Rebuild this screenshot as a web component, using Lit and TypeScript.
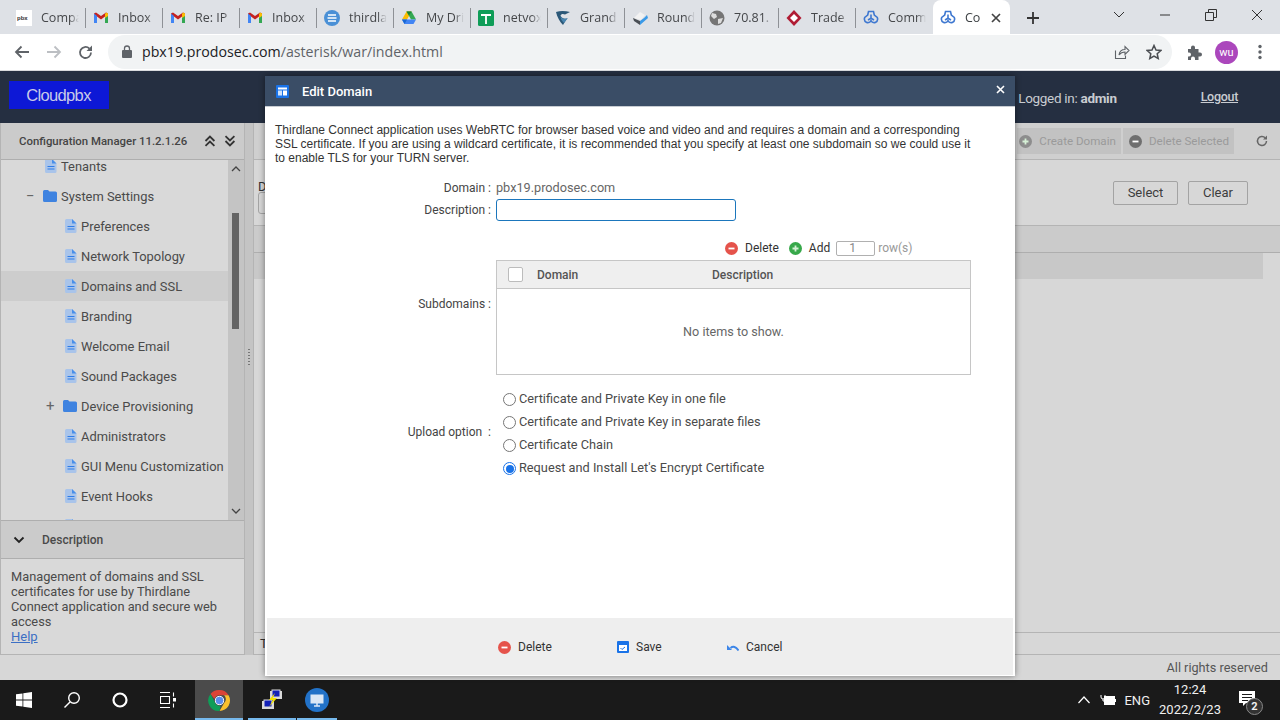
import { LitElement, html, css, svg } from "lit";
import { customElement } from "lit/decorators.js";

const gmail = svg`<svg width="16" height="16" viewBox="0 0 16 16"><path d="M1 3.500V13h3V6.500L8 9.500l4-3V13h3V3.500L13 2.500 8 6 3 2.500z" fill="#c5221f"/><path d="M1 3.500V13h3V6z" fill="#4285f4"/><path d="M15 3.500V13h-3V6z" fill="#34a853"/><path d="M13 2.500 15 3.500 15 6 12 8V4z" fill="#fbbc04"/></svg>`;
const triad = svg`<svg width="16" height="16" viewBox="0 0 16 16" fill="none" stroke="#3f78d0" stroke-width="1.600"><path d="M5.500 1.500h5l.8 3.500 3 2.500c.7 2-.3 4.200-2 5-1.500.4-2.800 0-3.800-1L8 10.500l-.5 1c-1 1-2.300 1.400-3.800 1-1.700-.8-2.700-3-2-5l3-2.500z"/><path d="M8 4.500v4M5 10l3-1.800L11 10"/></svg>`;

const tabs = [
  { t: "Compa", i: svg`<svg width="16" height="16"><rect width="16" height="16" fill="#fff"/><text x="1" y="10" font-size="6" font-family="Liberation Sans" font-weight="700" fill="#333">pbx</text></svg>` },
  { t: "Inbox", i: gmail },
  { t: "Re: IP", i: gmail },
  { t: "Inbox", i: gmail },
  { t: "thirdla", i: svg`<svg width="16" height="16"><circle cx="8" cy="8" r="8" fill="#4a90d6"/><path d="M4 5h8M3.500 8h9M4 11h8" stroke="#fff" stroke-width="1.300"/></svg>` },
  { t: "My Dri", i: svg`<svg width="16" height="16"><path d="M5.500 1.500h5L6 9.500H1z" fill="#fbbc04"/><path d="M5.500 1.500h5l4.500 8h-5z" fill="#34a853"/><path d="M1 9.500h14l-2.500 4.500h-9z" fill="#4285f4"/><path d="M1 9.500h5L3.500 14z" fill="#1967d2"/><path d="M5.500 1.500h5l-2.500 4z" fill="#188038"/></svg>` },
  { t: "netvox", i: svg`<svg width="16" height="16"><rect width="16" height="16" rx="1.500" fill="#0f9d58"/><path d="M3 5h10M8 5v9" stroke="#fff" stroke-width="1.800"/></svg>` },
  { t: "Grand", i: svg`<svg width="16" height="16" viewBox="0 0 16 16"><path d="M1 2C5 .5 10 .5 15 2L10 4.500C8 3.500 6 4 5.500 5.500 6 8 9 9 12 8.500L8 15C5 12 2 7 1 2z" fill="#2b5878"/><path d="M5.500 6C7 9 10 9.500 13 8L9 13C7 11 5.500 9 5.500 6z" fill="#4a86b0"/></svg>` },
  { t: "Round", i: svg`<svg width="16" height="16" viewBox="0 0 16 16"><path d="M2 8 8 2l5 3-4 5z" fill="#f2f2f2"/><path d="M1 8l1 3 6 4V11z" fill="#4a4f55"/><path d="M8 15V11l4-3 3-3 1 3z" fill="#3a9ae8"/></svg>` },
  { t: "70.81.", i: svg`<svg width="16" height="16"><circle cx="8" cy="8" r="7.500" fill="#757575"/><path d="M3 3l4 1 1 3-3 2-3-3zM9 9l5-1-2 5-3 1z" fill="#ddd"/></svg>` },
  { t: "Trade", i: svg`<svg width="16" height="16"><path d="M8 0 15.500 8 8 16 .5 8z" fill="#b01c34"/><path d="M8 4l4 4-4 4-4-4z" fill="#fff"/></svg>` },
  { t: "Comm", i: triad },
];

const fileIcon = svg`<svg class="ic" width="12" height="14" viewBox="0 0 12 14"><path d="M1.500 0H7l4.500 4.500V12.500A1.500 1.500 0 0 1 10 14H1.500A1.500 1.500 0 0 1 0 12.500V1.500A1.500 1.500 0 0 1 1.500 0z" fill="#a9c4ea"/><path d="M7 0l4.500 4.500H7z" fill="#4a8fe8"/><path d="M2.500 7.500h7M2.500 10h7" stroke="#2f7de8" stroke-width="1.100"/></svg>`;
const folderIcon = svg`<svg class="ic" width="14" height="12" viewBox="0 0 14 12"><path d="M0 1.500A1.500 1.500 0 0 1 1.500 0H5l1.500 1.500h6A1.500 1.500 0 0 1 14 3v7.500a1.500 1.500 0 0 1-1.500 1.500h-11A1.500 1.500 0 0 1 0 10.500z" fill="#3f83e0"/></svg>`;
const circ = (color: string, plus: boolean, s = 13) => svg`<svg class="ic" width=${s} height=${s} viewBox="0 0 13 13"><circle cx="6.500" cy="6.500" r="6.500" fill=${color}/><path d=${plus ? "M3.500 6.500h6M6.500 3.500v6" : "M3.500 6.500h6"} stroke=${plus ? "#d6f0d6" : "#fff"} stroke-width="1.800"/></svg>`;

const tree = [
  { t: "Tenants", d: 2 }, { t: "System Settings", d: 1, folder: true, sign: "−" },
  { t: "Preferences", d: 2 }, { t: "Network Topology", d: 2 }, { t: "Domains and SSL", d: 2, sel: true },
  { t: "Branding", d: 2 }, { t: "Welcome Email", d: 2 }, { t: "Sound Packages", d: 2 },
  { t: "Device Provisioning", d: 2, folder: true, sign: "+" }, { t: "Administrators", d: 2 },
  { t: "GUI Menu Customization", d: 2 }, { t: "Event Hooks", d: 2 }, { t: "", d: 2 },
];

@customElement("app-root")
export class AppRoot extends LitElement {
  static styles = css`
    :host { display: block; width: 1280px; height: 720px; overflow: hidden; position: relative; font-family: Roboto, sans-serif; color: #333; }
    * { box-sizing: border-box; }
    .ic { flex: none; display: block; }
    .page { display: flex; flex-direction: column; height: 720px; }
    .tabs { height: 34px; background: #dee1e6; display: flex; padding: 0 0 0 9px; align-items: stretch; flex: none; }
    .tab { width: 77px; display: flex; align-items: center; padding-left: 7px; gap: 9px; font: 12.500px "Open Sans", sans-serif; color: #45474a; position: relative; padding-top: 1px; }
    .tab .lbl { width: 38px; overflow: hidden; white-space: nowrap; -webkit-mask-image: linear-gradient(90deg,#000 75%,transparent); mask-image: linear-gradient(90deg,#000 75%,transparent); }
    .tab.sep::after { content: ""; position: absolute; right: 0; top: 8px; height: 20px; width: 1px; background: #8e9196; }
    .tab.active { background: #fff; border-radius: 8px 8px 0 0; color: #3c4043; }
    .tab.active .lbl { width: 20px; }
    .tab.active .x { margin-left: -3px; }
    .newtab { width: 46px; display: flex; justify-content: center; align-items: center; padding-top: 1px; }
    .winctl { margin-left: auto; display: flex; align-items: center; padding-bottom: 4px; }
    .winctl div { width: 46px; display: flex; justify-content: center; }
    .toolbar { height: 37px; background: #fff; display: flex; align-items: center; flex: none; padding-left: 14px; border-bottom: 1px solid #d8dade; }
    .nav { display: flex; gap: 16px; align-items: center; width: 94px; flex: none; }
    .omni { width: 1064px; height: 34px; background: #f1f3f4; border-radius: 17px; display: flex; align-items: center; padding: 0 0 0 14px; gap: 10px; flex: none; margin-top: -1px; font: 14.200px "Open Sans", sans-serif; color: #5f6368; }
    .omni b { font-weight: 400; color: #202124; }
    .omni .r { margin-left: auto; display: flex; gap: 16px; padding-right: 10px; align-items: center; }
    .ext { display: flex; align-items: center; gap: 13px; padding-left: 15px; }
    .avatar { width: 23px; height: 23px; border-radius: 50%; background: #ab47bc; color: #fff; font-size: 11px; display: flex; justify-content: center; align-items: center; }
    .dots { margin-left: 7px; }
    .apphead { height: 52px; background: #252f41; display: flex; flex: none; position: relative; align-items: flex-start; padding: 10px 9px; color: #cfd2d6; font-size: 14px; }
    .logo { width: 100px; height: 28px; background: #0d18d6; color: #c8cae8; font: 16.500px "Liberation Sans", sans-serif; letter-spacing: -.65px; display: flex; align-items: center; justify-content: center; padding-right: 1px; }
    .login { margin-left: auto; display: flex; gap: 84px; padding: 9px 33px 0 0; font: 13.500px Roboto, sans-serif; letter-spacing: -.3px; color: #c9ccd1; align-items: flex-start; }
    .login b { font-weight: 700; }
    .login u { font-weight: 500; font-size: 12.500px; margin-top: -1px; }
    .main { flex: 1; display: flex; background: #d7d7d7; min-height: 0; }
    .left { width: 245px; flex: none; border: solid #b4b4b4; border-width: 0 1px 1px 1px; display: flex; flex-direction: column; background: #d9d9d9; }
    .lhead { height: 37px; background: #cbcbcb; border-bottom: 1px solid #aeaeae; display: flex; align-items: center; padding-left: 18px; font: 500 11.400px Roboto, sans-serif; color: #444; flex: none; padding-bottom: 1px; }
    .lhead span { width: 187px; white-space: nowrap; }
    .lhead svg { margin-right: 8px; }
    .treewrap { height: 360px; display: flex; flex: none; overflow: hidden; }
    .tree { flex: 1; overflow: hidden; }
    .tree-inner { margin-top: -9px; }
    .row { height: 30px; display: flex; align-items: center; font-size: 12.900px; color: #4a4a4a; white-space: nowrap; padding-left: 64px; gap: 4px; position: relative; }
    .row.d1 { padding-left: 42px; }
    .row.folder { padding-left: 62px; }
    .row.d1.folder { padding-left: 42px; }
    .row.sel { background: #cdcdcd; }
    .row .sign { position: absolute; font-size: 15px; color: #666; }
    .row.d1 .sign { left: 25px; }
    .row.folder:not(.d1) .sign { left: 45px; }
    .row.t0 { padding-left: 44px; }
    .sb { width: 16px; background: #c4c4c4; flex: none; display: flex; flex-direction: column; align-items: center; justify-content: space-between; padding: 6px 0; position: relative; }
    .sb .thumb { position: absolute; top: 53px; left: 4px; width: 7px; height: 116px; background: #646464; }
    .dh { height: 39px; background: #cbcbcb; border: solid #aeaeae; border-width: 1px 0; display: flex; align-items: center; padding-left: 12px; gap: 17px; font: 500 12px Roboto, sans-serif; color: #4a4a4a; flex: none; }
    .desc { padding: 10px 10px 0; font-size: 12.800px; line-height: 15px; color: #4a4a4a; }
    .desc a { color: #3c6fc4; text-decoration: underline; display: block; font-size: 13px; }
    .split { width: 8px; flex: none; background: #c4c4c4; display: flex; align-items: center; justify-content: center; padding-bottom: 62px; }
    .split i { display: block; width: 2px; height: 18px; background: repeating-linear-gradient(#777 0 1px, transparent 1px 3px); }
    .right { flex: 1; display: flex; flex-direction: column; border-left: 1px solid #b4b4b4; min-width: 0; }
    .rtool { height: 37px; background: #cfcfcf; border-bottom: 1px solid #b4b4b4; display: flex; justify-content: flex-end; align-items: center; padding: 0 12px 0 0; gap: 2px; font-size: 11.600px; color: #9a9a9a; flex: none; }
    .rtool .b { background: #c2c2c2; height: 26px; display: flex; align-items: center; gap: 7px; padding: 0 5px 0 2px; white-space: nowrap; }
    .rtool .b.del { padding-left: 6px; }
    .rtool .ref { margin-left: 20px; }
    .filter { height: 65px; background: #d7d7d7; display: flex; flex: none; position: relative; padding: 21px 32px 0 4px; gap: 10px; font-size: 13px; }
    .filter .d { width: 855px; color: #333; line-height: 1; margin-top: -1px; }
    .filter .d i { display: block; width: 20px; height: 22px; border: 1px solid #a5a5a5; border-radius: 3px; margin-top: -1px; }
    .btn { height: 24px; border: 1px solid #a3a3a3; border-radius: 2px; display: flex; align-items: center; justify-content: center; color: #3d3d3d; font-size: 13px; padding-bottom: 1px; flex: none; }
    .gh { height: 28px; background: #cbcbcb; border-top: 1px solid #b4b4b4; border-bottom: 1px solid #aeaeae; flex: none; }
    .gr { height: 26px; background: #d7d7d7; flex: none; position: relative; padding-right: 17px; }
    .gr div { height: 100%; background: #c8c8c8; }
    .grow { flex: 1; }
    .rfoot { height: 23px; background: #d7d7d7; border-top: 1px solid #b4b4b4; border-bottom: 1px solid #b4b4b4; font-size: 13px; padding: 3px 6px; flex: none; }
    .foot { height: 25px; background: #d7d7d7; display: flex; justify-content: flex-end; align-items: center; padding-right: 12px; font-size: 12.700px; color: #555; flex: none; }
    .task { height: 40px; background: #1a1a1a; display: flex; flex: none; color: #fff; align-items: stretch; }
    .tk { width: 48px; display: flex; align-items: center; justify-content: center; position: relative; flex: none; }
    .tk.on { background: #4b4b4b; margin-left: 3px; margin-right: 5px; }
    .tk.nar { width: 40px; margin-left: 1px; }
    .tk.under::after { content: ""; position: absolute; left: 0; right: 0; bottom: 0; height: 2px; background: #76b9ed; }
    .tray { margin-left: auto; display: flex; align-items: center; font-size: 13px; color: #f0f0f0; padding-right: 25px; }
    .tray .clock { width: 70px; text-align: center; line-height: 20px; font-size: 13px; margin-left: 5px; }
    .tray .eng { margin-left: 8px; }
    .notif { display: flex; position: relative; margin-left: 14px; margin-top: -3px; }
    .notif span { position: absolute; left: 7px; top: 7px; width: 17px; height: 17px; border-radius: 50%; background: #333; border: 1px solid #888; font: 700 11px Roboto, sans-serif; display: flex; align-items: center; justify-content: center; }

    .modal { position: absolute; left: 265px; top: 76px; width: 750px; height: 600px; background: #fff; box-shadow: 0 0 6px rgba(0,0,0,.45); display: flex; flex-direction: column; color: #333; }
    .mh { height: 31px; background: #3a4d66; border-bottom: 1px solid #c7ccd2; display: flex; align-items: center; padding-left: 11px; gap: 13px; color: #fff; font: 500 13px Roboto, sans-serif; flex: none; }
    .mh .close { margin-left: auto; margin-right: 10px; margin-top: -3px; display: flex; }
    .mb { flex: 1; padding: 16px 10px 0; min-height: 0; }
    .intro { font: 12px/14px "Liberation Sans", sans-serif; color: #333; width: 700px; }
    .form { margin-top: 15px; font-size: 12px; color: #444; }
    .fr { display: flex; align-items: center; }
    .fr .l { width: 216px; text-align: right; white-space: nowrap; flex: none; }
    .fr .v { margin-left: 5px; }
    .fr.dom { height: 15px; }
    .fr.dom .v { color: #666; font-size: 12.700px; }
    .fr.des { margin-top: 4px; height: 22px; }
    .inp { width: 240px; height: 22px; border: 1px solid #1b76bc; border-radius: 3px; }
    .tb { display: flex; align-items: center; margin: 19px 0 0 450px; height: 16px; gap: 7px; font-size: 12px; color: #333; }
    .tb .num { width: 39px; height: 15px; border: 1px solid #b0b0b0; border-radius: 2px; font-size: 12px; color: #888; padding-left: 12px; line-height: 13px; margin-left: -1px; }
    .tb .rows { color: #999; margin-left: -4px; }
    .tb span.s { margin-right: 3px; }
    .sub { display: flex; margin-top: 4px; align-items: center; }
    .sub .l { width: 216px; text-align: right; flex: none; padding-bottom: 28px; }
    .grid { margin-left: 5px; width: 475px; height: 115px; border: 1px solid #c6c6c6; display: flex; flex-direction: column; }
    .ghd { height: 28px; background: #efefef; border-bottom: 1px solid #c6c6c6; display: flex; align-items: center; font: 500 12px Roboto, sans-serif; color: #555; flex: none; }
    .cb { width: 15px; height: 15px; border: 1px solid #bcbcbc; border-radius: 2px; background: #fff; margin: 0 14px 0 11px; flex: none; }
    .ghd .a { width: 175px; }
    .nop { flex: 1; display: flex; align-items: center; justify-content: center; font-size: 12.600px; color: #666; }
    .up { display: flex; align-items: center; margin-top: 12px; }
    .up .l { width: 216px; flex: none; display: flex; justify-content: flex-end; white-space: nowrap; padding-bottom: 3px; }
    .opts { margin-left: 12px; display: flex; flex-direction: column; }
    .opt { height: 23px; display: flex; align-items: center; gap: 3px; font-size: 12.750px; color: #4a4a4a; white-space: nowrap; }
    .radio { width: 13px; height: 13px; border: 1px solid #767676; border-radius: 50%; flex: none; background: #fff; margin-top: 2px; }
    .radio.on { border: 1.500px solid #1a73e8; padding: 1.500px; background: #1a73e8; background-clip: content-box; }
    .mf { height: 57px; margin: 0 2px 1px; background: #eeeeee; display: flex; align-items: center; flex: none; font-size: 12px; color: #333; position: relative; }
    .act { position: absolute; display: flex; align-items: center; top: 22px; gap: 7px; }
  `;

  render() {
    return html`<div class="page">
      <div class="tabs">
        ${tabs.map((x, i) => html`<div class="tab ${i < 11 ? "sep" : ""}">${x.i}<span class="lbl">${x.t}</span></div>`)}
        <div class="tab active">${triad}<span class="lbl">Co</span><svg class="x" width="10" height="10" viewBox="0 0 10 10"><path d="M1 1l8 8M9 1L1 9" stroke="#444" stroke-width="1.700"/></svg></div>
        <div class="newtab"><svg width="14" height="14"><path d="M7 1v12M1 7h12" stroke="#333" stroke-width="1.800"/></svg></div>
        <div class="winctl">
          <div><svg width="12" height="8"><path d="M1 1l5 5 5-5" fill="none" stroke="#333"/></svg></div>
          <div><svg width="12" height="2"><path d="M1 1h10" stroke="#333"/></svg></div>
          <div><svg width="12" height="12"><path d="M.5 3.500h8v8h-8zM3.500 3.500v-3h8v8h-3" fill="none" stroke="#333"/></svg></div>
          <div><svg width="12" height="12"><path d="M1 1l10 10M11 1 1 11" stroke="#333"/></svg></div>
        </div>
      </div>
      <div class="toolbar">
        <div class="nav">
          <svg width="16" height="14" viewBox="0 0 16 14"><path d="M15 7H2M7.500 1.500 2 7l5.500 5.500" fill="none" stroke="#5f6368" stroke-width="1.800"/></svg>
          <svg width="16" height="14" viewBox="0 0 16 14"><path d="M1 7h13M8.500 1.500 14 7l-5.500 5.500" fill="none" stroke="#bcbfc3" stroke-width="1.800"/></svg>
          <svg width="15" height="15" viewBox="0 0 15 15"><path d="M13 7.500A5.500 5.500 0 1 1 11.400 3.600" fill="none" stroke="#5f6368" stroke-width="1.800"/><path d="M14 .5V6H8.500z" fill="#5f6368"/></svg>
        </div>
        <div class="omni">
          <svg width="10" height="13" viewBox="0 0 10 13"><path d="M2.500 5V3.500a2.500 2.500 0 0 1 5 0V5" fill="none" stroke="#5f6368" stroke-width="1.300"/><rect y="5" width="10" height="8" rx="1" fill="#5f6368"/></svg>
          <span><b>pbx19.prodosec.com</b>/asterisk/war/index.html</span>
          <div class="r">
            <svg width="16" height="16" viewBox="0 0 16 16" fill="none" stroke="#5f6368" stroke-width="1.100"><path d="M1.500 6.500v8h10v-3"/><path d="M5 11c.5-3.500 3-5.500 6-5.500V2.500L15 6.500l-4 4V8c-2.500 0-4.500 1-6 3z"/></svg>
            <svg width="16" height="16" viewBox="0 0 16 16"><path d="M8 1.500l2 4.500 4.800.5-3.600 3.200 1 4.800L8 12l-4.200 2.500 1-4.800L1.200 6.500 6 6z" fill="none" stroke="#4a4d51" stroke-width="1.500"/></svg>
          </div>
        </div>
        <div class="ext">
          <svg width="15" height="15" viewBox="0 0 15 15"><path d="M1 4h3V2.500a2 2 0 0 1 4 0V4h3.500v3.500H13a2 2 0 0 1 0 4h-1.500V15H8v-1.500a2 2 0 0 0-4 0V15H1v-3.500h1a2 2 0 0 0 0-4H1z" fill="#5f6368"/></svg>
          <div class="avatar">wu</div>
          <svg class="dots" width="4" height="16"><circle cx="2" cy="2.500" r="1.700" fill="#5f6368"/><circle cx="2" cy="8" r="1.700" fill="#5f6368"/><circle cx="2" cy="13.500" r="1.700" fill="#5f6368"/></svg>
        </div>
      </div>
      <div class="apphead">
        <div class="logo">Cloudpbx</div>
        <div class="login"><span>Logged in: <b>admin</b></span><u>Logout</u></div>
      </div>
      <div class="main">
        <div class="left">
          <div class="lhead"><span>Configuration Manager 11.2.1.26</span>
            <svg width="12" height="12" viewBox="0 0 12 12" fill="none" stroke="#333" stroke-width="1.800"><path d="M1.500 6 6 1.500 10.500 6M1.500 11 6 6.500 10.500 11"/></svg>
            <svg width="12" height="12" viewBox="0 0 12 12" fill="none" stroke="#333" stroke-width="1.800"><path d="M1.500 1 6 5.500 10.500 1M1.500 6 6 10.500 10.500 6"/></svg>
          </div>
          <div class="treewrap">
            <div class="tree"><div class="tree-inner">
              ${tree.map((r, i) => html`<div class="row d${r.d} ${r.folder ? "folder" : ""} ${r.sel ? "sel" : ""} ${i === 0 ? "t0" : ""}">
                ${r.sign ? html`<span class="sign">${r.sign}</span>` : ""}${r.folder ? folderIcon : fileIcon}<span>${r.t}</span></div>`)}
            </div></div>
            <div class="sb">
              <svg width="10" height="6"><path d="M1 5l4-4 4 4" fill="none" stroke="#444" stroke-width="1.300"/></svg>
              <div class="thumb"></div>
              <svg width="10" height="6"><path d="M1 1l4 4 4-4" fill="none" stroke="#444" stroke-width="1.300"/></svg>
            </div>
          </div>
          <div class="dh"><svg width="12" height="8"><path d="M1.500 1.500 6 6l4.500-4.500" fill="none" stroke="#222" stroke-width="1.800"/></svg><span>Description</span></div>
          <div class="desc">Management of domains and SSL certificates for use by Thirdlane Connect application and secure web access<a>Help</a></div>
        </div>
        <div class="split"><i></i></div>
        <div class="right">
          <div class="rtool">
            <div class="b">${circ("#8d8d8d", true)}<span>Create Domain</span></div>
            <div class="b del">${circ("#6f6f6f", false)}<span>Delete Selected</span></div>
            <svg class="ref" width="12" height="12" viewBox="0 0 12 12"><path d="M10.500 6A4.500 4.500 0 1 1 9.200 2.800" fill="none" stroke="#666" stroke-width="1.500"/><path d="M11 .5V4.500H7z" fill="#666"/></svg>
          </div>
          <div class="filter">
            <div class="d">D<i></i></div>
            <div class="btn" style="width:65px">Select</div>
            <div class="btn" style="width:60px">Clear</div>
          </div>
          <div class="gh"></div>
          <div class="gr"><div></div></div>
          <div class="grow"></div>
          <div class="rfoot">T</div>
        </div>
      </div>
      <div class="foot">All rights reserved</div>
      <div class="task">
        <div class="tk"><svg width="16" height="16" viewBox="0 0 16 16" fill="#fff"><path d="M0 2.300 6.500 1.400V7.600H0zM7.300 1.300 16 0V7.600H7.300zM0 8.400H6.500V14.600L0 13.700zM7.300 8.400H16V16L7.300 14.700z"/></svg></div>
        <div class="tk"><svg width="18" height="18" viewBox="0 0 18 18" fill="none" stroke="#fff" stroke-width="1.400"><circle cx="11" cy="7" r="5.300"/><path d="M7 11 1.500 16.500"/></svg></div>
        <div class="tk"><svg width="16" height="16"><circle cx="8" cy="8" r="6.500" fill="none" stroke="#fff" stroke-width="2.200"/></svg></div>
        <div class="tk"><svg width="16" height="16" viewBox="0 0 16 16" fill="none" stroke="#fff" stroke-width="1.100"><path d="M0 .5h10M0 15.500h10M.5 4.500h9v7h-9z"/><path d="M13.500 .5v4M13.500 11.500v4" /><rect x="13" y="6" width="3" height="3.500" fill="#fff" stroke="none"/></svg></div>
        <div class="tk on under"><svg width="23" height="23" viewBox="0 0 24 24"><path d="M12 1a11 11 0 0 1 9.500 5.500H12a5.500 5.500 0 0 0-5.300 4L2.600 5.200A11 11 0 0 1 12 1z" fill="#db4437"/><path d="M21.500 6.500A11 11 0 0 1 12 23l4.700-8.200a5.500 5.500 0 0 0 .1-8.300z" fill="#fbc02d"/><path d="M12 23A11 11 0 0 1 2.600 5.200l4.700 8.800a5.500 5.500 0 0 0 5.800 3.400z" fill="#0f9d58"/><circle cx="12" cy="12" r="4.300" fill="#5b8def" stroke="#fff" stroke-width="1"/></svg></div>
        <div class="tk under"><svg width="24" height="24" viewBox="0 0 24 24"><rect x="2" y="13" width="12" height="8" fill="#d8d8d8"/><rect x="4" y="12" width="8" height="7" fill="#1220b8" stroke="#ddd"/><rect x="10" y="3" width="12" height="8" fill="#d8d8d8"/><rect x="12" y="2" width="8" height="7" fill="#1220b8" stroke="#ddd"/><path d="M15 5 9 12h4l-4 7 8-9h-4z" fill="#f4e300"/></svg></div>
        <div class="tk under nar"><svg width="24" height="24" viewBox="0 0 24 24"><circle cx="12" cy="12" r="12" fill="#2272c8"/><rect x="5.500" y="6.500" width="13" height="9" fill="#dbe8f6"/><path d="M9 18h6M12 15v3" stroke="#dbe8f6" stroke-width="1.500"/></svg></div>
        <div class="tray">
          <svg width="12" height="8" viewBox="0 0 12 8" style="margin-right:10px"><path d="M.5 7l5.500-6 5.500 6" fill="none" stroke="#fff" stroke-width="1.200"/></svg>
          <svg width="16" height="12" viewBox="0 0 16 12"><path d="M1 1v2a2 2 0 0 0 4 0V1M3 5v2h2" fill="none" stroke="#fff"/><rect x="4.500" y="2.500" width="10" height="8" fill="#fff" stroke="#fff"/><rect x="15" y="5" width="1" height="3" fill="#fff"/></svg>
          <span class="eng">ENG</span>
          <div class="clock">12:24<br />2022/2/23</div>
          <div class="notif"><svg width="16" height="15" viewBox="0 0 16 15"><path d="M0 0h16v12H7l-3 3v-3H0z" fill="#fff"/><path d="M3 3.500h10M3 6.500h10M3 9.500h6" stroke="#1a1a1a"/></svg><span>2</span></div>
        </div>
      </div>
    </div>

    <div class="modal">
      <div class="mh">
        <svg width="13" height="13" viewBox="0 0 13 13"><rect width="13" height="13" rx="1" fill="#1a73e8"/><rect x="2" y="2.500" width="9" height="2" fill="#fff"/><rect x="2" y="5.500" width="4" height="5" fill="#cfe2fb"/><rect x="7" y="5.500" width="4" height="5" fill="#fff"/></svg>
        <span>Edit Domain</span>
        <span class="close"><svg width="9" height="9" viewBox="0 0 9 9"><path d="M1 1l7 7M8 1 1 8" stroke="#fff" stroke-width="1.600"/></svg></span>
      </div>
      <div class="mb">
        <div class="intro">Thirdlane Connect application uses WebRTC for browser based voice and video and and requires a domain and a corresponding SSL certificate. If you are using a wildcard certificate, it is recommended that you specify at least one subdomain so we could use it to enable TLS for your TURN server.</div>
        <div class="form">
          <div class="fr dom"><span class="l">Domain :</span><span class="v">pbx19.prodosec.com</span></div>
          <div class="fr des"><span class="l">Description :</span><div class="inp v"></div></div>
          <div class="tb">${circ("#e5534b", false)}<span class="s">Delete</span>${circ("#37a84a", true)}<span>Add</span><div class="num">1</div><span class="rows">row(s)</span></div>
          <div class="sub"><span class="l">Subdomains :</span>
            <div class="grid"><div class="ghd"><div class="cb"></div><div class="a">Domain</div><div>Description</div></div><div class="nop">No items to show.</div></div>
          </div>
          <div class="up"><span class="l">Upload option &nbsp;:</span>
            <div class="opts">
              <div class="opt"><i class="radio"></i>Certificate and Private Key in one file</div>
              <div class="opt"><i class="radio"></i>Certificate and Private Key in separate files</div>
              <div class="opt"><i class="radio"></i>Certificate Chain</div>
              <div class="opt"><i class="radio on"></i>Request and Install Let's Encrypt Certificate</div>
            </div>
          </div>
        </div>
      </div>
      <div class="mf">
        <div class="act" style="left:231px">${circ("#e5534b", false)}<span>Delete</span></div>
        <div class="act" style="left:350px"><svg class="ic" width="12" height="12" viewBox="0 0 12 12"><path d="M0 1a1 1 0 0 1 1-1h10a1 1 0 0 1 1 1v10a1 1 0 0 1-1 1H1a1 1 0 0 1-1-1z" fill="#1a73e8"/><path d="M2 4h8v6H2z" fill="#fff"/><path d="M3.500 7l1.500 1.500 3-2.500" fill="none" stroke="#1a73e8"/></svg><span>Save</span></div>
        <div class="act" style="left:460px"><svg class="ic" width="12" height="9" viewBox="0 0 12 9"><path d="M3.500 5C6 3 9 3.500 11.500 7.500" fill="none" stroke="#3d86e8" stroke-width="2"/><path d="M0 2v5h5z" fill="#3d86e8"/></svg><span>Cancel</span></div>
      </div>
    </div>`;
  }
}
